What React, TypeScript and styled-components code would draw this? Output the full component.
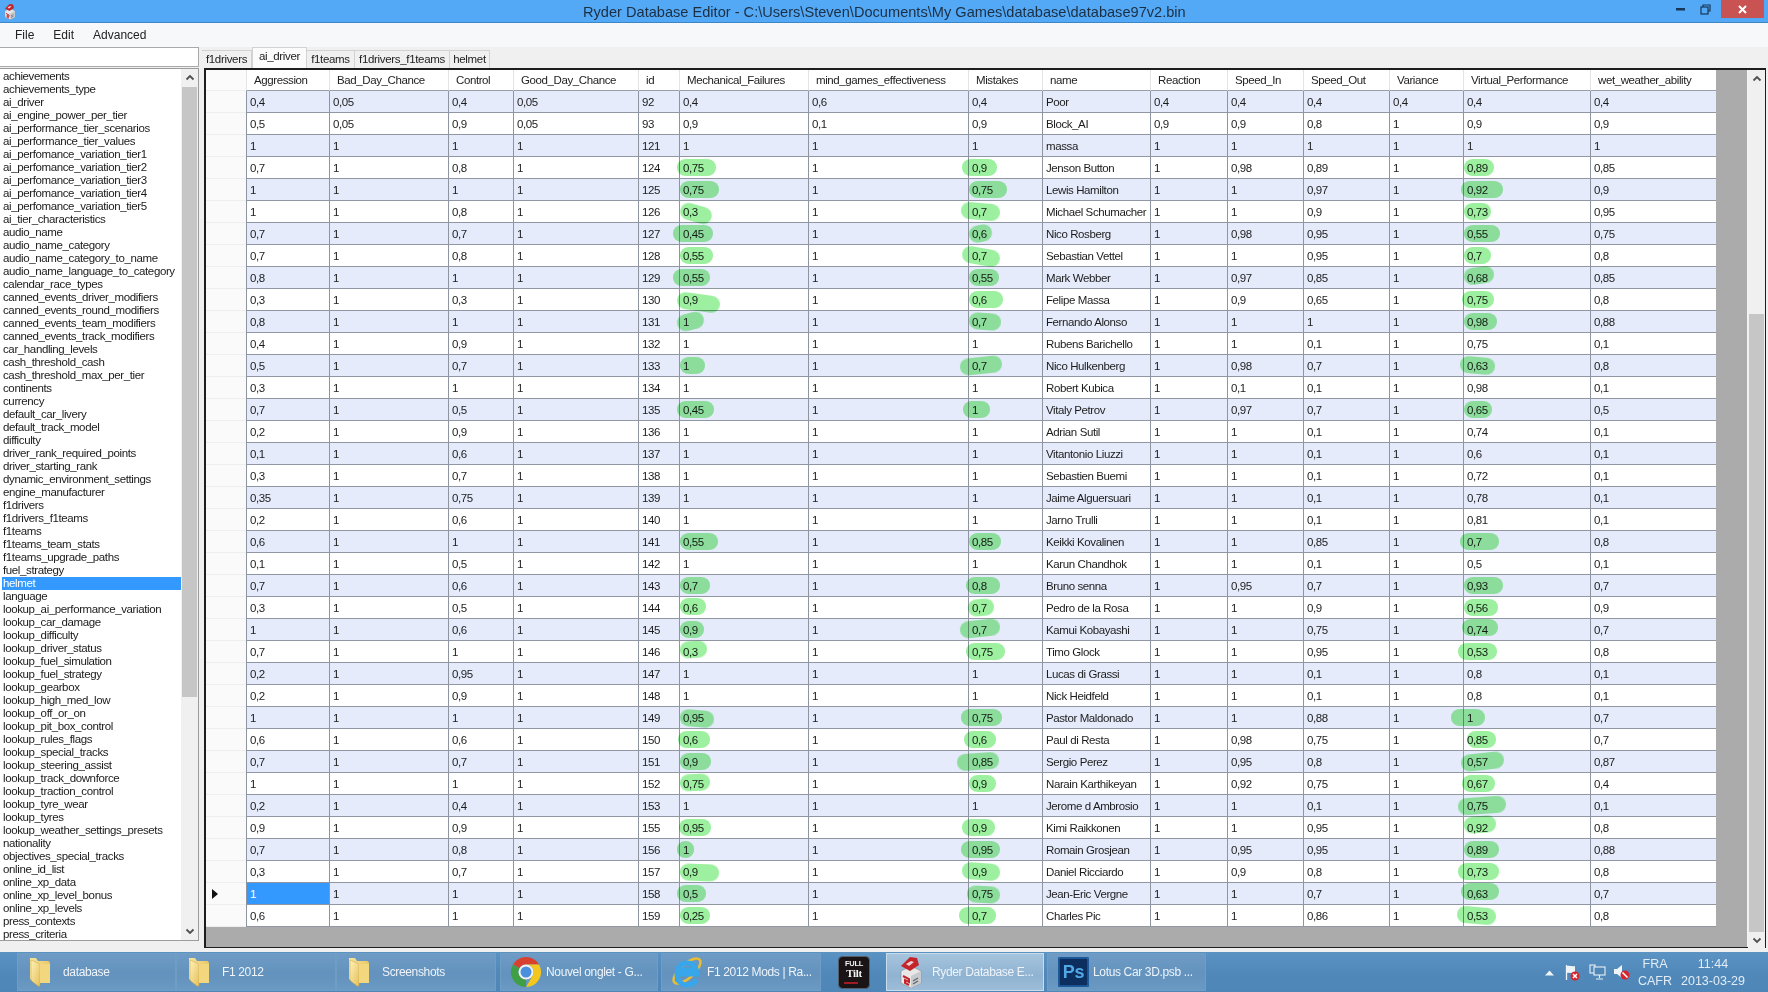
import React from "react";
import styled, { createGlobalStyle } from "styled-components";

const Global = createGlobalStyle`
  html, body { margin: 0; padding: 0; background: #f0f0f0; }
  #root { width: 1768px; height: 992px; overflow: hidden; }
  * { box-sizing: border-box; }
`;

const uiFont = `"Liberation Sans", Arial, sans-serif`;

const App_ = styled.div`
  width: 1768px; height: 992px; display: flex; flex-direction: column;
  font-family: ${uiFont}; background: #f0f0f0; color: #1c1c1c;
`;
const TitleBar = styled.div`
  height: 23px; flex: none; display: flex; align-items: flex-start; background: #53a9f6;
  border-bottom: 1px solid #3c86c6; position: relative;
`;
const TitleIconSlot = styled.div`width: 22px; height: 22px; padding: 3px 0 0 4px; flex: none;`;
const TitleText = styled.div`
  position: absolute; left: 583px; top: 3px; width: 610px; font-size: 14.6px; line-height: 19px;
  color: #1c2f42; white-space: nowrap;
`;
const WinControls = styled.div`margin-left: auto; display: flex; align-items: flex-start; padding-right: 4px;`;
const WinBtn = styled.div<{ $w: number; $close?: boolean }>`
  width: ${p => p.$w}px; height: 18px; display: flex; align-items: center; justify-content: center;
  margin-left: ${p => (p.$close ? 3 : 0)}px;
  background: ${p => (p.$close ? "#c85352" : "transparent")};
`;
const MenuBar = styled.div`
  height: 24px; flex: none; display: flex; align-items: center; padding-left: 15px; gap: 19px;
  background: #f7f8f9; font-size: 12px; color: #222;
`;
const MenuItem = styled.span``;
const Main = styled.div`flex: 1; min-height: 0; display: flex; background: #f0f0f0;`;
const Sidebar = styled.div`width: 199px; flex: none; display: flex; flex-direction: column; padding-bottom: 11px;`;
const SearchBox = styled.div`height: 20px; flex: none; background: #fff; border: 1px solid #a9a9a9; border-left: none;`;
const ListBox = styled.div`
  flex: 1; min-height: 0; display: flex; margin-top: 1px; background: #fff;
  border: 1px solid #9c9c9c; border-left: none;
`;
const ListItems = styled.div`flex: 1; min-width: 0; padding: 1px 0 0 2px; overflow: hidden;`;
const ListItem = styled.div<{ $sel?: boolean }>`
  height: 13px; line-height: 13px; padding-left: 1px; font-size: 11.5px; letter-spacing: -0.38px; white-space: nowrap;
  color: ${p => (p.$sel ? "#fff" : "#1a1a1a")}; background: ${p => (p.$sel ? "#3399ff" : "transparent")};
`;
const VScroll = styled.div<{ $w: number }>`
  width: ${p => p.$w}px; flex: none; display: flex; flex-direction: column; background: #f0f0f0;
`;
const ScrollBtn = styled.div<{ $h: number; $end?: boolean }>`
  height: ${p => p.$h}px; flex: none; display: flex; align-items: center; justify-content: center; background: #f0f0f0;
  margin-top: ${p => (p.$end ? "auto" : "0")};
`;
const Thumb = styled.div<{ $top: number; $h: number }>`
  height: ${p => p.$h}px; margin: ${p => p.$top}px 1px 0; flex: none; background: #c6c6c6;
`;
const Content = styled.div`flex: 1; min-width: 0; padding: 0 2px 4px 3px; display: flex; flex-direction: column;`;
const Tabs = styled.div`height: 21px; flex: none; display: flex; align-items: flex-end;`;
const Tab = styled.div<{ $w: number; $active?: boolean }>`
  width: ${p => p.$w}px; height: ${p => (p.$active ? 21 : 18)}px; line-height: 17px; text-align: center;
  font-size: 11.5px; letter-spacing: -0.33px; white-space: nowrap; color: #222;
  background: ${p => (p.$active ? "#fbfbfb" : "#f0f0f0")};
  border: 1px solid #d2d2d2; border-bottom: none; border-left-width: ${p => (p.$active ? 1 : 0)}px;
`;
const GridFrame = styled.div`
  flex: 1; min-height: 0; margin-left: 2px; display: flex; border: 2px solid #1d1d1d; border-right-width: 1px;
  border-bottom-width: 1px; background: #ababab;
`;
const GridPane = styled.div`flex: 1; min-width: 0; border-right: 1px solid #f4f4f4; overflow: hidden;`;
const columns = "40px 83px 119px 65px 125px 41px 129px 160px 74px 108px 77px 76px 86px 74px 127px 126px";
const HeaderRow = styled.div`
  display: grid; grid-template-columns: ${columns}; height: 21px; width: 1510px; background: #fff;
`;
const HeaderCell = styled.div`
  height: 21px; line-height: 21px; padding-left: 7px; font-size: 11.5px; letter-spacing: -0.4px; color: #222;
  white-space: nowrap; overflow: hidden; background: #fff; border-left: 1px solid #e4e4e4; border-bottom: 1px solid #9aa0aa;
`;
const CornerCell = styled.div`height: 21px; background: #fbfbfb; border-bottom: 1px solid #efefef;`;
const Row = styled.div<{ $odd: boolean }>`
  display: grid; grid-template-columns: ${columns}; height: 22px; width: 1510px;
  background: ${p => (p.$odd ? "#e5ebfb" : "#fff")};
`;
const RowHead = styled.div`
  height: 22px; background: #fafafa; border-bottom: 1px solid #eeeeee; display: flex; align-items: center; padding-left: 6px;
`;
const Cell = styled.div<{ $sel?: boolean }>`
  position: relative; height: 22px; line-height: 23px; padding-left: 3px; font-size: 11.5px; letter-spacing: -0.4px;
  white-space: nowrap; color: ${p => (p.$sel ? "#fff" : "#1c1c1c")}; background: ${p => (p.$sel ? "#3399ff" : "transparent")};
  border-left: 1px solid #8f95a0; border-bottom: 1px solid #9097a3;
`;
const Scribble = styled.span`
  position: absolute; top: 2px; height: 17px; border-radius: 9px / 8px; background: #9cf09f; mix-blend-mode: multiply;
  filter: blur(0.6px); pointer-events: none;
`;
const Taskbar = styled.div`
  height: 40px; flex: none; display: flex; align-items: flex-start; padding: 1px 0 0 17px;
  background: linear-gradient(180deg, #5b93c3 0%, #5088b9 55%, #4e86b7 100%); color: #eef4fa;
  font-size: 12px; letter-spacing: -0.35px;
`;
const TaskBtn = styled.div<{ $w: number; $ml: number; $active?: boolean }>`
  width: ${p => p.$w}px; margin-left: ${p => p.$ml}px; height: 38px; flex: none; display: flex; align-items: center;
  white-space: nowrap; border: 1px solid ${p => (p.$active ? "#c9dcec" : "#6f9dc4")};
  background: ${p => (p.$active
    ? "linear-gradient(180deg,#a6c4dd,#8fb3d2 60%,#9dbdd9)"
    : "linear-gradient(180deg,#6e9cc6,#6292bd 55%,#6a99c3)")};
`;
const IconSlot = styled.div<{ $pad: number }>`width: 45px; flex: none; padding-left: ${p => p.$pad}px; display: flex; align-items: center;`;
const PinnedIcon = styled.div`width: 62px; margin-left: 3px; height: 38px; flex: none; padding-left: 14px; display: flex; align-items: center;`;
const Tray = styled.div`margin-left: auto; display: flex; align-items: center; height: 38px; padding: 1px 23px 0 0; letter-spacing: 0;`;
const TrayIcon = styled.div<{ $w: number }>`width: ${p => p.$w}px; flex: none; display: flex; justify-content: center;`;
const Lang = styled.div`width: 42px; text-align: center; font-size: 12.5px; line-height: 17px; color: #e2ecf5;`;
const Clock = styled.div`width: 64px; margin-left: 5px; text-align: center; font-size: 12.5px; line-height: 17px; color: #e2ecf5; white-space: nowrap;`;

const listNames = ["achievements","achievements_type","ai_driver","ai_engine_power_per_tier","ai_performance_tier_scenarios","ai_performance_tier_values","ai_perfomance_variation_tier1","ai_perfomance_variation_tier2","ai_perfomance_variation_tier3","ai_perfomance_variation_tier4","ai_perfomance_variation_tier5","ai_tier_characteristics","audio_name","audio_name_category","audio_name_category_to_name","audio_name_language_to_category","calendar_race_types","canned_events_driver_modifiers","canned_events_round_modifiers","canned_events_team_modifiers","canned_events_track_modifiers","car_handling_levels","cash_threshold_cash","cash_threshold_max_per_tier","continents","currency","default_car_livery","default_track_model","difficulty","driver_rank_required_points","driver_starting_rank","dynamic_environment_settings","engine_manufacturer","f1drivers","f1drivers_f1teams","f1teams","f1teams_team_stats","f1teams_upgrade_paths","fuel_strategy","helmet","language","lookup_ai_performance_variation","lookup_car_damage","lookup_difficulty","lookup_driver_status","lookup_fuel_simulation","lookup_fuel_strategy","lookup_gearbox","lookup_high_med_low","lookup_off_or_on","lookup_pit_box_control","lookup_rules_flags","lookup_special_tracks","lookup_steering_assist","lookup_track_downforce","lookup_traction_control","lookup_tyre_wear","lookup_tyres","lookup_weather_settings_presets","nationality","objectives_special_tracks","online_id_list","online_xp_data","online_xp_level_bonus","online_xp_levels","press_contexts","press_criteria"];

const headers = ["Aggression","Bad_Day_Chance","Control","Good_Day_Chance","id","Mechanical_Failures","mind_games_effectiveness","Mistakes","name","Reaction","Speed_In","Speed_Out","Variance","Virtual_Performance","wet_weather_ability"];

const rows = `0,4|0,05|0,4|0,05|92|0,4|0,6|0,4|Poor|0,4|0,4|0,4|0,4|0,4|0,4
0,5|0,05|0,9|0,05|93|0,9|0,1|0,9|Block_AI|0,9|0,9|0,8|1|0,9|0,9
1|1|1|1|121|1|1|1|massa|1|1|1|1|1|1
0,7|1|0,8|1|124|0,75|1|0,9|Jenson Button|1|0,98|0,89|1|0,89|0,85
1|1|1|1|125|0,75|1|0,75|Lewis Hamilton|1|1|0,97|1|0,92|0,9
1|1|0,8|1|126|0,3|1|0,7|Michael Schumacher|1|1|0,9|1|0,73|0,95
0,7|1|0,7|1|127|0,45|1|0,6|Nico Rosberg|1|0,98|0,95|1|0,55|0,75
0,7|1|0,8|1|128|0,55|1|0,7|Sebastian Vettel|1|1|0,95|1|0,7|0,8
0,8|1|1|1|129|0,55|1|0,55|Mark Webber|1|0,97|0,85|1|0,68|0,85
0,3|1|0,3|1|130|0,9|1|0,6|Felipe Massa|1|0,9|0,65|1|0,75|0,8
0,8|1|1|1|131|1|1|0,7|Fernando Alonso|1|1|1|1|0,98|0,88
0,4|1|0,9|1|132|1|1|1|Rubens Barichello|1|1|0,1|1|0,75|0,1
0,5|1|0,7|1|133|1|1|0,7|Nico Hulkenberg|1|0,98|0,7|1|0,63|0,8
0,3|1|1|1|134|1|1|1|Robert Kubica|1|0,1|0,1|1|0,98|0,1
0,7|1|0,5|1|135|0,45|1|1|Vitaly Petrov|1|0,97|0,7|1|0,65|0,5
0,2|1|0,9|1|136|1|1|1|Adrian Sutil|1|1|0,1|1|0,74|0,1
0,1|1|0,6|1|137|1|1|1|Vitantonio Liuzzi|1|1|0,1|1|0,6|0,1
0,3|1|0,7|1|138|1|1|1|Sebastien Buemi|1|1|0,1|1|0,72|0,1
0,35|1|0,75|1|139|1|1|1|Jaime Alguersuari|1|1|0,1|1|0,78|0,1
0,2|1|0,6|1|140|1|1|1|Jarno Trulli|1|1|0,1|1|0,81|0,1
0,6|1|1|1|141|0,55|1|0,85|Keikki Kovalinen|1|1|0,85|1|0,7|0,8
0,1|1|0,5|1|142|1|1|1|Karun Chandhok|1|1|0,1|1|0,5|0,1
0,7|1|0,6|1|143|0,7|1|0,8|Bruno senna|1|0,95|0,7|1|0,93|0,7
0,3|1|0,5|1|144|0,6|1|0,7|Pedro de la Rosa|1|1|0,9|1|0,56|0,9
1|1|0,6|1|145|0,9|1|0,7|Kamui Kobayashi|1|1|0,75|1|0,74|0,7
0,7|1|1|1|146|0,3|1|0,75|Timo Glock|1|1|0,95|1|0,53|0,8
0,2|1|0,95|1|147|1|1|1|Lucas di Grassi|1|1|0,1|1|0,8|0,1
0,2|1|0,9|1|148|1|1|1|Nick Heidfeld|1|1|0,1|1|0,8|0,1
1|1|1|1|149|0,95|1|0,75|Pastor Maldonado|1|1|0,88|1|1|0,7
0,6|1|0,6|1|150|0,6|1|0,6|Paul di Resta|1|0,98|0,75|1|0,85|0,7
0,7|1|0,7|1|151|0,9|1|0,85|Sergio Perez|1|0,95|0,8|1|0,57|0,87
1|1|1|1|152|0,75|1|0,9|Narain Karthikeyan|1|0,92|0,75|1|0,67|0,4
0,2|1|0,4|1|153|1|1|1|Jerome d Ambrosio|1|1|0,1|1|0,75|0,1
0,9|1|0,9|1|155|0,95|1|0,9|Kimi Raikkonen|1|1|0,95|1|0,92|0,8
0,7|1|0,8|1|156|1|1|0,95|Romain Grosjean|1|0,95|0,95|1|0,89|0,88
0,3|1|0,7|1|157|0,9|1|0,9|Daniel Ricciardo|1|0,9|0,8|1|0,73|0,8
1|1|1|1|158|0,5|1|0,75|Jean-Eric Vergne|1|1|0,7|1|0,63|0,7
0,6|1|1|1|159|0,25|1|0,7|Charles Pic|1|1|0,86|1|0,53|0,8`.split("\n").map(r => r.split("|"));

// [left, width, rotate, dy] of each marker stroke, per id, for columns 5, 7, 13
type Mark = [number, number, number?, number?];
const marks: Record<string, { [col: number]: Mark }> = {
  "124": { 5: [-3, 39], 7: [-7, 35], 13: [0, 30] },
  "125": { 5: [0, 39], 7: [0, 38], 13: [-3, 42] },
  "126": { 5: [0, 32, 16, 2], 7: [-8, 39, 5], 13: [0, 27] },
  "127": { 5: [-7, 40], 7: [0, 23, -12], 13: [0, 36] },
  "128": { 5: [0, 33], 7: [-7, 38, 10, 1], 13: [0, 27] },
  "129": { 5: [-7, 37], 7: [0, 30], 13: [0, 30, -8, -2] },
  "130": { 5: [-3, 43, 8, 3], 7: [0, 34], 13: [-2, 32] },
  "131": { 5: [-3, 27, -14], 7: [0, 32, 4], 13: [0, 33] },
  "133": { 5: [0, 25], 7: [-9, 42, -6], 13: [-4, 35, 5] },
  "135": { 5: [-3, 37], 7: [-6, 27], 13: [0, 28] },
  "141": { 5: [0, 38], 7: [0, 32], 13: [-4, 39] },
  "143": { 5: [0, 30], 7: [-3, 34], 13: [0, 39] },
  "144": { 5: [0, 26, 0, -1], 7: [-1, 26, -5], 13: [0, 34] },
  "145": { 5: [0, 24], 7: [-9, 40, -6, -1], 13: [-2, 36, 0, -2] },
  "146": { 5: [0, 27, -4, -2], 7: [-3, 39], 13: [-6, 39] },
  "149": { 5: [0, 34, 5, 1], 7: [-8, 41], 13: [-13, 34] },
  "150": { 5: [-2, 32], 7: [-5, 32], 13: [3, 29] },
  "151": { 5: [0, 31], 7: [-12, 42, -4], 13: [-3, 43, -6] },
  "152": { 5: [0, 30, -3, -1], 7: [0, 27], 13: [-2, 33] },
  "153": { 13: [-6, 48, -4] },
  "155": { 5: [-1, 32], 7: [-7, 33], 13: [0, 32, -4, -3] },
  "156": { 5: [-3, 17], 7: [-8, 39], 13: [0, 35] },
  "157": { 5: [0, 39, 2, 1], 7: [-7, 38, 4], 13: [-6, 41] },
  "158": { 5: [-3, 29], 7: [-2, 33, 3, 1], 13: [-3, 38, 0, -2] },
  "159": { 5: [0, 30], 7: [-10, 37], 13: [-7, 39, 5] },
};

const Chevron = ({ up, size = 10 }: { up?: boolean; size?: number }) => (
  <svg width={size} height={size} viewBox="0 0 10 10">
    <path d={up ? "M1.5 6.5 5 3l3.5 3.5" : "M1.5 3.5 5 7l3.5-3.5"} fill="none" stroke="#505050" strokeWidth="1.8" />
  </svg>
);

const FolderIcon = () => (
  <svg width="24" height="30" viewBox="0 0 24 30">
    <defs>
      <linearGradient id="fb" x1="0" x2="1" y1="0" y2="0"><stop offset="0" stopColor="#f6e49a" /><stop offset="1" stopColor="#e9c765" /></linearGradient>
      <linearGradient id="ff" x1="0" x2="1" y1="0" y2="1"><stop offset="0" stopColor="#fff2b5" /><stop offset="1" stopColor="#e4bf5c" /></linearGradient>
    </defs>
    <path d="M2 1h6l2 3h10c1 0 2 1 2 2v20H8L2 22z" fill="url(#fb)" />
    <path d="M3 3l7 3c1 .5 2 1 2 3v19c0 1.200-1 1.500-2 1l-5-4c-1-.6-2-1.500-2-3z" fill="url(#ff)" stroke="#c9a448" strokeWidth=".5" />
    <path d="M12 7h10v19H12z" fill="#f2d77f" />
  </svg>
);

const ChromeIcon = () => (
  <svg width="32" height="32" viewBox="0 0 32 32">
    <path d="M3 8.500A15 15 0 0 1 29 8.500H16A7.500 7.500 0 0 0 9.500 12.250Z" fill="#d9412f" />
    <path d="M29 8.500A15 15 0 0 1 16 31L22.500 19.750A7.500 7.500 0 0 0 16 8.500Z" fill="#f4c71f" />
    <path d="M16 31A15 15 0 0 1 3 8.500L9.500 19.750A7.500 7.500 0 0 0 16 23.500Z" fill="#3f9f45" />
    <path d="M3 8.500L9.500 19.750A7.500 7.500 0 0 1 9.500 12.250Z" fill="#3f9f45" />
    <circle cx="16" cy="16" r="7.500" fill="#f2f2f2" />
    <circle cx="16" cy="16" r="5.500" fill="#4a8fdc" />
  </svg>
);

const IEIcon = () => (
  <svg width="32" height="36" viewBox="0 0 32 36">
    <ellipse cx="16" cy="17" rx="17" ry="7" transform="rotate(-42 16 17)" fill="none" stroke="#e8bd36" strokeWidth="2.500" />
    <path d="M7 20h19C26 12.500 21.500 9 16 9 10 9 6 13.500 6 20S10 31 16 31c4.500 0 8-2 9.500-5.500M9.500 16h13" fill="none" stroke="#37a6ea" strokeWidth="5" />
  </svg>
);

const FullTiltIcon = () => (
  <svg width="32" height="33" viewBox="0 0 32 33">
    <rect x=".5" y=".5" width="31" height="32" rx="4" fill="#1a1416" stroke="#55606c" />
    <text x="16" y="10" fontSize="7.500" fontWeight="700" fill="#f2f2f2" textAnchor="middle" fontFamily="Liberation Sans">FULL</text>
    <text x="16" y="21" fontSize="11" fontWeight="700" fill="#f4f4f4" textAnchor="middle" fontFamily="Liberation Serif">Tilt</text>
    <path d="M6 27h14" stroke="#a01c20" strokeWidth="2" />
  </svg>
);

const RyderIcon = ({ w, h }: { w: number; h: number }) => (
  <svg width={w} height={h} viewBox="0 0 24 32">
    <path d="M2 15l10-5 10 5v12l-10 5-10-5z" fill="#e8e8e8" stroke="#8b8b8b" strokeWidth=".6" />
    <path d="M12 20v12l10-5V15z" fill="#c7cacf" />
    <path d="M2 10l9-9 7 1 2 7-9 6z" fill="#c3252b" />
    <path d="M7 8l5-3 3 1-5 4z" fill="#f0d0d0" />
    <path d="M4 20l6 3v3l-4-2v3l4 2" fill="none" stroke="#c3252b" strokeWidth="2" />
    <path d="M14 25l5-3M14 28l5-3" stroke="#666" strokeWidth="1.400" />
  </svg>
);

const PsIcon = () => (
  <svg width="31" height="30" viewBox="0 0 31 30">
    <rect width="31" height="30" rx="1.500" fill="#0e3a72" />
    <rect x="1" y="1" width="29" height="28" fill="#0c2f5f" stroke="#2a7bc4" />
    <text x="15.500" y="21" fontSize="18" fontWeight="700" fill="#52a8e6" textAnchor="middle" fontFamily="Liberation Sans">Ps</text>
  </svg>
);

const NoBadge = ({ x, y }: { x: number; y: number }) => (
  <g transform={`translate(${x} ${y})`}>
    <circle r="4.500" fill="#d4262c" />
    <path d="M-2.500-2.500 2.500 2.500" stroke="#fff" strokeWidth="1.600" />
  </g>
);

const Flag = () => (
  <svg width="18" height="17" viewBox="0 0 18 17">
    <path d="M2.500 1v15" stroke="#eef3f8" strokeWidth="1.300" />
    <path d="M3 2c3-1 5 1 8 0v7c-3 1-5-1-8 0z" fill="#eef3f8" />
    <g transform="translate(11 12)"><circle r="4.500" fill="#d4262c" /><path d="M-2-2 2 2M2-2-2 2" stroke="#fff" strokeWidth="1.500" /></g>
  </svg>
);
const Net = () => (
  <svg width="17" height="17" viewBox="0 0 17 17" fill="none" stroke="#eaf0f6" strokeWidth="1.100">
    <rect x="1" y="1" width="5" height="8" />
    <rect x="5" y="3" width="11" height="8" fill="#4e86b7" />
    <path d="M10.500 11v3M7 15h7" />
  </svg>
);
const Speaker = () => (
  <svg width="18" height="17" viewBox="0 0 18 17">
    <path d="M1 5h3l5-4v13l-5-4H1z" fill="#eef3f8" />
    <NoBadge x={12} y={11} />
  </svg>
);

const taskButtons = [
  { w: 159, ml: 0, pad: 10, label: "database", icon: <FolderIcon /> },
  { w: 160, ml: 0, pad: 10, label: "F1 2012", icon: <FolderIcon /> },
  { w: 160, ml: 0, pad: 10, label: "Screenshots", icon: <FolderIcon /> },
  { w: 158, ml: 4, pad: 9, label: "Nouvel onglet - G...", icon: <ChromeIcon /> },
  { w: 160, ml: 3, pad: 9, label: "F1 2012 Mods | Ra...", icon: <IEIcon /> },
];

export default function App() {
  return (
    <App_>
      <Global />
      <TitleBar>
        <TitleIconSlot><RyderIcon w={12} h={17} /></TitleIconSlot>
        <TitleText>Ryder Database Editor - C:\Users\Steven\Documents\My Games\database\database97v2.bin</TitleText>
        <WinControls>
          <WinBtn $w={25}>
            <svg width="9" height="3" viewBox="0 0 9 3"><rect width="9" height="2.500" fill="#16375a" /></svg>
          </WinBtn>
          <WinBtn $w={25}>
            <svg width="11" height="11" viewBox="0 0 11 11" fill="none" stroke="#16375a" strokeWidth="1.200"><path d="M3 3V1h7v6H8" /><rect x="1" y="3" width="7" height="7" /></svg>
          </WinBtn>
          <WinBtn $w={43} $close>
            <svg width="9" height="9" viewBox="0 0 9 9"><path d="M1 1l7 7M8 1 1 8" stroke="#fff" strokeWidth="2" /></svg>
          </WinBtn>
        </WinControls>
      </TitleBar>
      <MenuBar>
        <MenuItem>File</MenuItem>
        <MenuItem>Edit</MenuItem>
        <MenuItem>Advanced</MenuItem>
      </MenuBar>
      <Main>
        <Sidebar>
          <SearchBox />
          <ListBox>
            <ListItems>
              {listNames.map(n => <ListItem key={n} $sel={n === "helmet"}>{n}</ListItem>)}
            </ListItems>
            <VScroll $w={17}>
              <ScrollBtn $h={18}><Chevron up /></ScrollBtn>
              <Thumb $top={0} $h={610} />
              <ScrollBtn $h={18} $end><Chevron /></ScrollBtn>
            </VScroll>
          </ListBox>
        </Sidebar>
        <Content>
          <Tabs>
            <Tab $w={50}>f1drivers</Tab>
            <Tab $w={55} $active>ai_driver</Tab>
            <Tab $w={48}>f1teams</Tab>
            <Tab $w={95}>f1drivers_f1teams</Tab>
            <Tab $w={40}>helmet</Tab>
          </Tabs>
          <GridFrame>
            <GridPane>
              <HeaderRow>
                <CornerCell />
                {headers.map(h => <HeaderCell key={h}>{h}</HeaderCell>)}
              </HeaderRow>
              {rows.map((r, i) => {
                const id = r[4];
                const m = marks[id] || {};
                return (
                  <Row key={id} $odd={i % 2 === 0}>
                    <RowHead>
                      {id === "158" && (
                        <svg width="6" height="10" viewBox="0 0 6 10"><path d="M0 0l6 5-6 5z" fill="#111" /></svg>
                      )}
                    </RowHead>
                    {r.map((v, c) => (
                      <Cell key={c} $sel={id === "158" && c === 0}>
                        {v}
                        {m[c] && (
                          <Scribble
                            style={{
                              left: m[c][0],
                              width: m[c][1],
                              transform: `translateY(${m[c][3] ?? 0}px) rotate(${m[c][2] ?? 0}deg)`,
                            }}
                          />
                        )}
                      </Cell>
                    ))}
                  </Row>
                );
              })}
            </GridPane>
            <VScroll $w={17}>
              <ScrollBtn $h={18}><Chevron up /></ScrollBtn>
              <Thumb $top={226} $h={618} />
              <ScrollBtn $h={16} $end><Chevron /></ScrollBtn>
            </VScroll>
          </GridFrame>
        </Content>
      </Main>
      <Taskbar>
        {taskButtons.map(b => (
          <TaskBtn key={b.label} $w={b.w} $ml={b.ml}>
            <IconSlot $pad={b.pad}>{b.icon}</IconSlot>
            {b.label}
          </TaskBtn>
        ))}
        <PinnedIcon><FullTiltIcon /></PinnedIcon>
        <TaskBtn $w={158} $ml={0} $active>
          <IconSlot $pad={12}><RyderIcon w={24} h={32} /></IconSlot>
          Ryder Database E...
        </TaskBtn>
        <TaskBtn $w={159} $ml={3}>
          <IconSlot $pad={10}><PsIcon /></IconSlot>
          Lotus Car 3D.psb ...
        </TaskBtn>
        <Tray>
          <TrayIcon $w={24}>
            <svg width="9" height="6" viewBox="0 0 9 6"><path d="M0 5.500 4.500 .5 9 5.500z" fill="#eef3f8" /></svg>
          </TrayIcon>
          <TrayIcon $w={24}><Flag /></TrayIcon>
          <TrayIcon $w={25}><Net /></TrayIcon>
          <TrayIcon $w={24}><Speaker /></TrayIcon>
          <Lang>FRA<br />CAFR</Lang>
          <Clock>11:44<br />2013-03-29</Clock>
        </Tray>
      </Taskbar>
    </App_>
  );
}
